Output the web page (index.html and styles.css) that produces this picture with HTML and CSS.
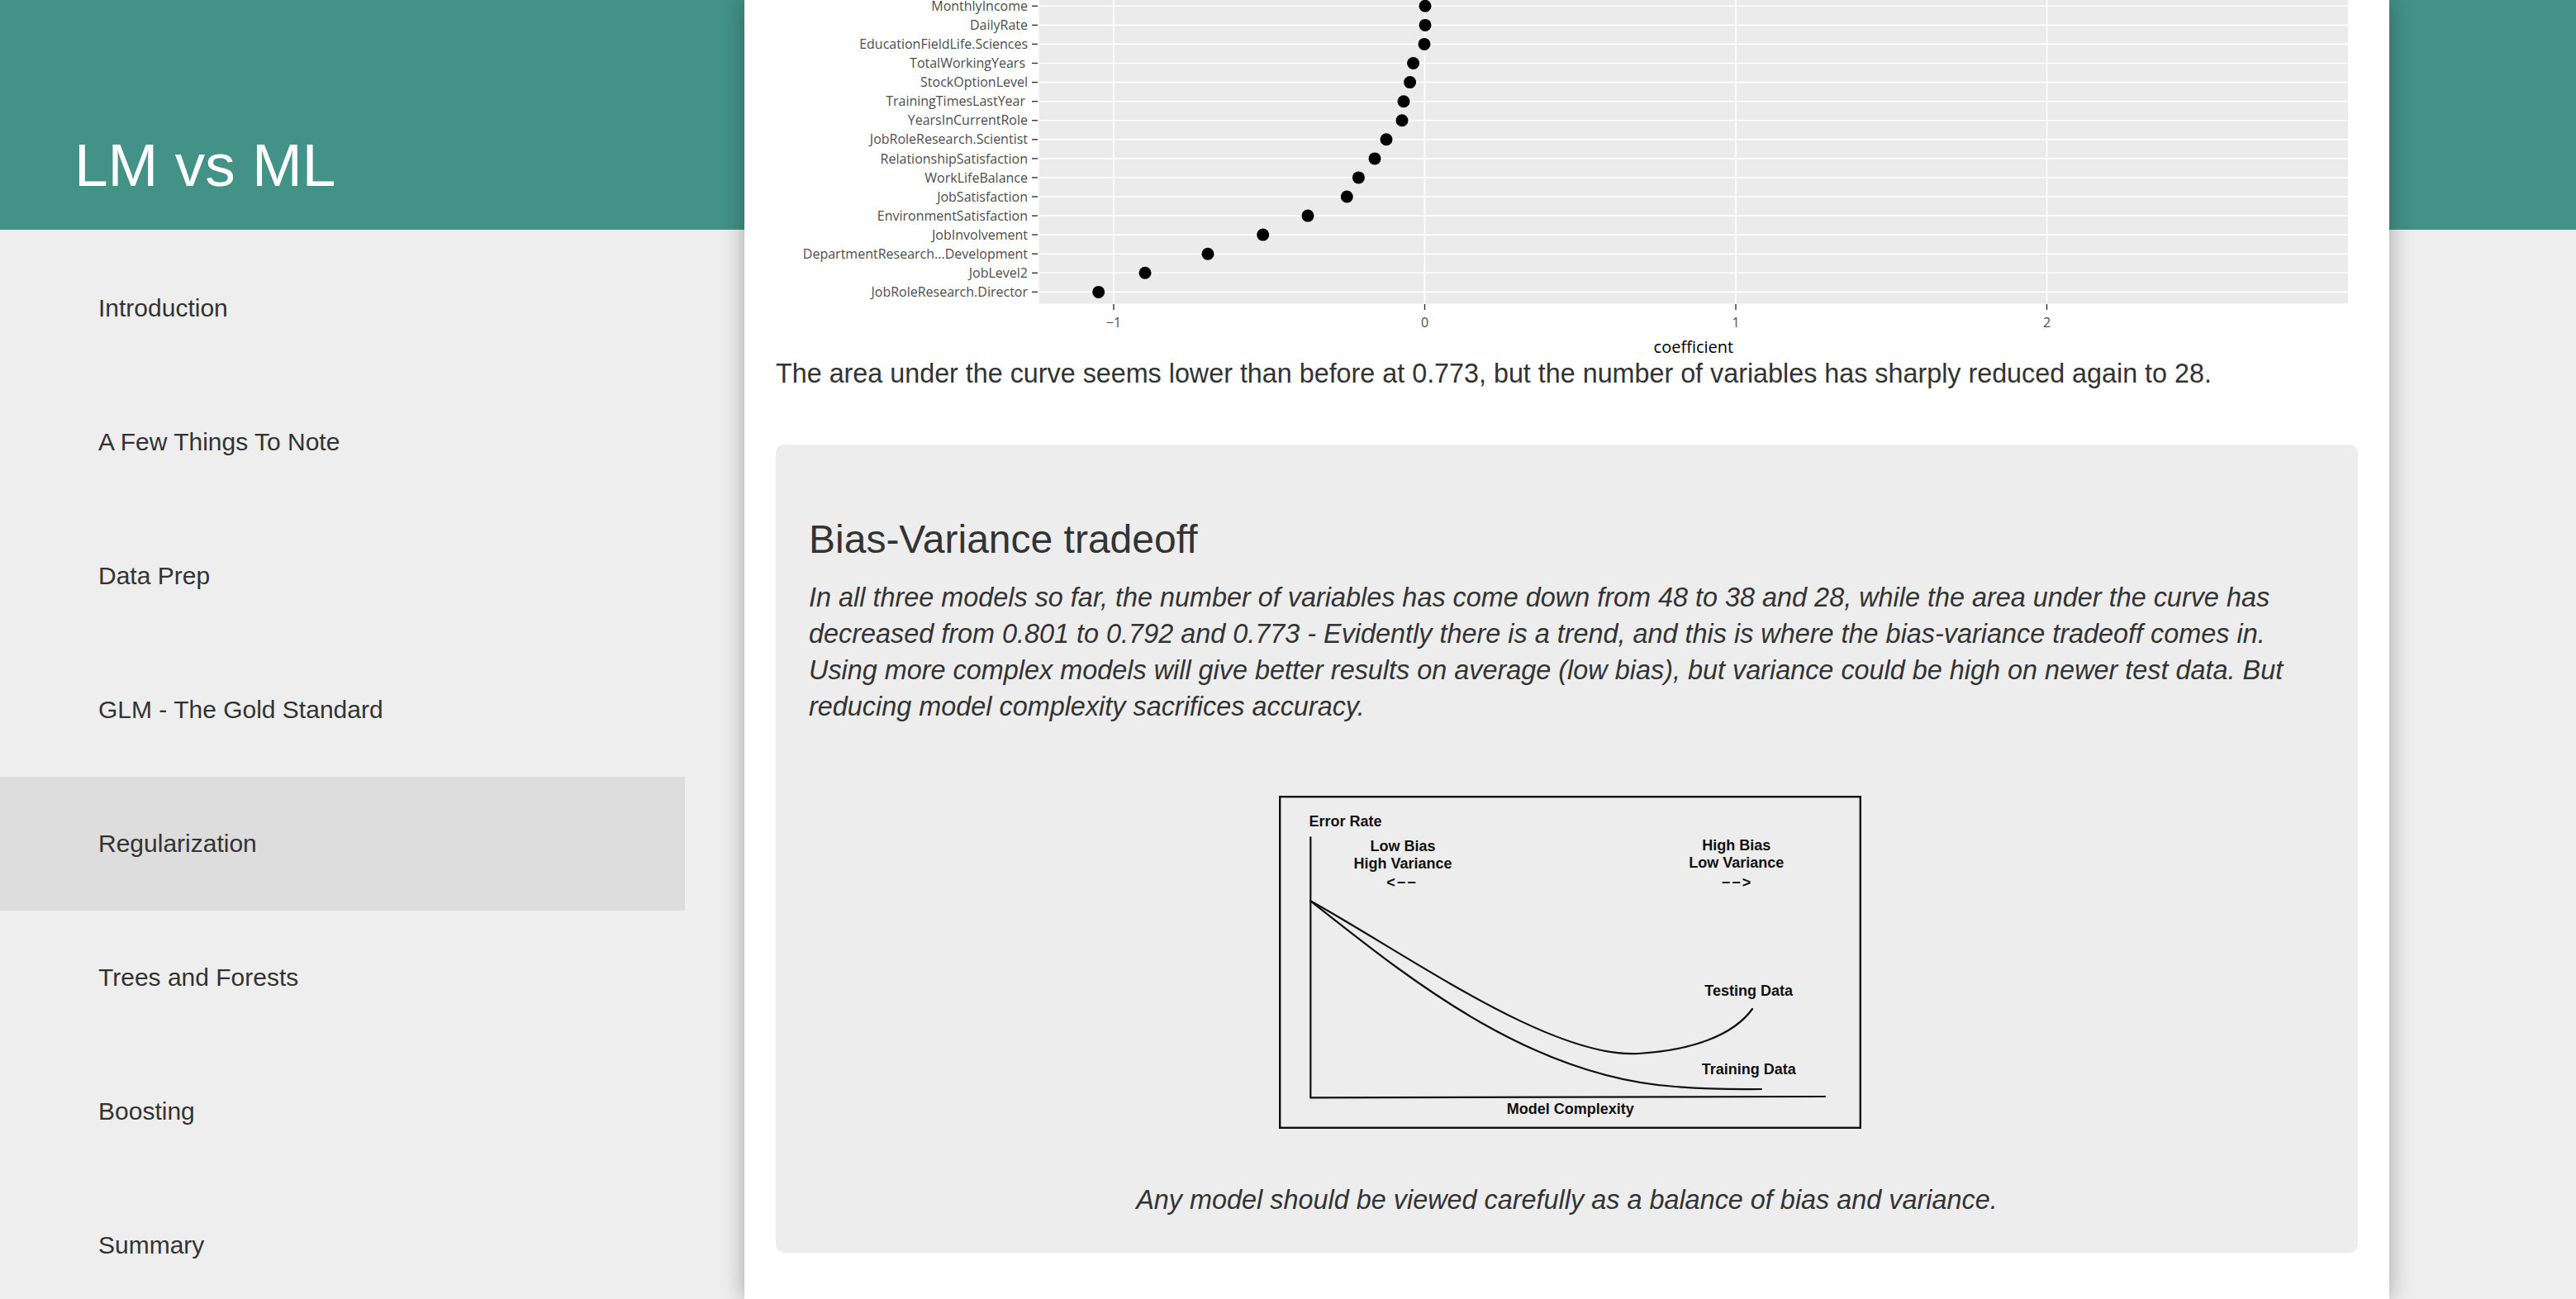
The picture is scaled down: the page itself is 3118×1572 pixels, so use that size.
FILE: index.html
```html
<!DOCTYPE html>
<html lang="en">
<head>
<meta charset="utf-8">
<title>LM vs ML</title>
<link rel="stylesheet" href="styles.css">
</head>
<body>
<div class="layout">
  <aside class="sidebar">
    <div class="brand"><h1>LM vs ML</h1></div>
    <nav class="menu">
      <a class="item">Introduction</a>
      <a class="item">A Few Things To Note</a>
      <a class="item">Data Prep</a>
      <a class="item">GLM - The Gold Standard</a>
      <a class="item active">Regularization</a>
      <a class="item">Trees and Forests</a>
      <a class="item">Boosting</a>
      <a class="item">Summary</a>
    </nav>
  </aside>

  <main class="page">
    <svg class="coef-plot" width="1915" height="432" viewBox="0 0 1915 432" xmlns="http://www.w3.org/2000/svg">
      <rect x="318.7" y="-10" width="1584.3" height="377.5" fill="#ebebeb"/>
      <g stroke="#ffffff" stroke-width="1.6">
        <line x1="409" y1="-10" x2="409" y2="367.5"/>
        <line x1="785.5" y1="-10" x2="785.5" y2="367.5"/>
        <line x1="1162" y1="-10" x2="1162" y2="367.5"/>
        <line x1="1538.5" y1="-10" x2="1538.5" y2="367.5"/>
        <line x1="318.7" y1="7.3" x2="1903" y2="7.3"/>
        <line x1="318.7" y1="30.4" x2="1903" y2="30.4"/>
        <line x1="318.7" y1="53.4" x2="1903" y2="53.4"/>
        <line x1="318.7" y1="76.5" x2="1903" y2="76.5"/>
        <line x1="318.7" y1="99.6" x2="1903" y2="99.6"/>
        <line x1="318.7" y1="122.7" x2="1903" y2="122.7"/>
        <line x1="318.7" y1="145.7" x2="1903" y2="145.7"/>
        <line x1="318.7" y1="168.8" x2="1903" y2="168.8"/>
        <line x1="318.7" y1="191.9" x2="1903" y2="191.9"/>
        <line x1="318.7" y1="214.9" x2="1903" y2="214.9"/>
        <line x1="318.7" y1="238" x2="1903" y2="238"/>
        <line x1="318.7" y1="261.1" x2="1903" y2="261.1"/>
        <line x1="318.7" y1="284.1" x2="1903" y2="284.1"/>
        <line x1="318.7" y1="307.2" x2="1903" y2="307.2"/>
        <line x1="318.7" y1="330.3" x2="1903" y2="330.3"/>
        <line x1="318.7" y1="353.4" x2="1903" y2="353.4"/>
      </g>
      <g fill="#000000">
        <circle cx="786" cy="7.3" r="7.5"/>
        <circle cx="786" cy="30.4" r="7.5"/>
        <circle cx="785" cy="53.4" r="7.5"/>
        <circle cx="771.6" cy="76.5" r="7.5"/>
        <circle cx="767.6" cy="99.6" r="7.5"/>
        <circle cx="760" cy="122.7" r="7.5"/>
        <circle cx="758" cy="145.7" r="7.5"/>
        <circle cx="739" cy="168.8" r="7.5"/>
        <circle cx="725" cy="191.9" r="7.5"/>
        <circle cx="705.4" cy="214.9" r="7.5"/>
        <circle cx="691.3" cy="238" r="7.5"/>
        <circle cx="644" cy="261.1" r="7.5"/>
        <circle cx="589.7" cy="284.1" r="7.5"/>
        <circle cx="523" cy="307.2" r="7.5"/>
        <circle cx="447" cy="330.3" r="7.5"/>
        <circle cx="390.7" cy="353.4" r="7.5"/>
      </g>
      <g stroke="#333333" stroke-width="1.4">
        <line x1="310" y1="7.3" x2="317" y2="7.3"/>
        <line x1="310" y1="30.4" x2="317" y2="30.4"/>
        <line x1="310" y1="53.4" x2="317" y2="53.4"/>
        <line x1="310" y1="76.5" x2="317" y2="76.5"/>
        <line x1="310" y1="99.6" x2="317" y2="99.6"/>
        <line x1="310" y1="122.7" x2="317" y2="122.7"/>
        <line x1="310" y1="145.7" x2="317" y2="145.7"/>
        <line x1="310" y1="168.8" x2="317" y2="168.8"/>
        <line x1="310" y1="191.9" x2="317" y2="191.9"/>
        <line x1="310" y1="214.9" x2="317" y2="214.9"/>
        <line x1="310" y1="238" x2="317" y2="238"/>
        <line x1="310" y1="261.1" x2="317" y2="261.1"/>
        <line x1="310" y1="284.1" x2="317" y2="284.1"/>
        <line x1="310" y1="307.2" x2="317" y2="307.2"/>
        <line x1="310" y1="330.3" x2="317" y2="330.3"/>
        <line x1="310" y1="353.4" x2="317" y2="353.4"/>
        <line x1="409" y1="368" x2="409" y2="375"/>
        <line x1="785.5" y1="368" x2="785.5" y2="375"/>
        <line x1="1162" y1="368" x2="1162" y2="375"/>
        <line x1="1538.5" y1="368" x2="1538.5" y2="375"/>
      </g>
      <g class="ylab" text-anchor="end">
        <text x="305" y="7.3" dy=".35em">MonthlyIncome</text>
        <text x="305" y="30.4" dy=".35em">DailyRate</text>
        <text x="305" y="53.4" dy=".35em">EducationFieldLife.Sciences</text>
        <text x="302" y="76.5" dy=".35em">TotalWorkingYears</text>
        <text x="305" y="99.6" dy=".35em">StockOptionLevel</text>
        <text x="302" y="122.7" dy=".35em">TrainingTimesLastYear</text>
        <text x="305" y="145.7" dy=".35em">YearsInCurrentRole</text>
        <text x="305" y="168.8" dy=".35em">JobRoleResearch.Scientist</text>
        <text x="305" y="191.9" dy=".35em">RelationshipSatisfaction</text>
        <text x="305" y="214.9" dy=".35em">WorkLifeBalance</text>
        <text x="305" y="238" dy=".35em">JobSatisfaction</text>
        <text x="305" y="261.1" dy=".35em">EnvironmentSatisfaction</text>
        <text x="305" y="284.1" dy=".35em">JobInvolvement</text>
        <text x="305" y="307.2" dy=".35em">DepartmentResearch...Development</text>
        <text x="305" y="330.3" dy=".35em">JobLevel2</text>
        <text x="305" y="353.4" dy=".35em">JobRoleResearch.Director</text>
      </g>
      <g class="xlab" text-anchor="middle">
        <text x="409" y="390" dy=".35em">−1</text>
        <text x="785.5" y="390" dy=".35em">0</text>
        <text x="1162" y="390" dy=".35em">1</text>
        <text x="1538.5" y="390" dy=".35em">2</text>
      </g>
      <text class="xtitle" x="1110.9" y="419.6" dy=".35em" text-anchor="middle">coefficient</text>
    </svg>

    <p class="lead">The area under the curve seems lower than before at 0.773, but the number of variables has sharply reduced again to 28.</p>

    <section class="note">
      <h2>Bias-Variance tradeoff</h2>
      <p class="note-text"><em>In all three models so far, the number of variables has come down from 48 to 38 and 28, while the area under the curve has<br>decreased from 0.801 to 0.792 and 0.773 - Evidently there is a trend, and this is where the bias-variance tradeoff comes in.<br>Using more complex models will give better results on average (low bias), but variance could be high on newer test data. But<br>reducing model complexity sacrifices accuracy.</em></p>
      <figure class="fig">
        <svg class="bv-diagram" width="705" height="403" viewBox="0 0 705 403" xmlns="http://www.w3.org/2000/svg">
          <rect x="1.2" y="1.2" width="702.6" height="400.6" fill="none" stroke="#111" stroke-width="2.4"/>
          <g fill="none" stroke="#111" stroke-width="2.2" stroke-linecap="round">
            <path d="M38.3 50.3 V365.3"/>
            <path d="M38.3 365.3 L661 364"/>
            <path d="M38.3 127.3 C160 195 330 318 435 312 C500 308 550 290 573 258"/>
            <path d="M38.3 127.3 C150 215 300 340 480 352 C530 356 560 355 584 355"/>
          </g>
          <g class="dlab">
            <text x="36.5" y="37.3">Error Rate</text>
            <text x="150" y="67.3" text-anchor="middle">Low Bias</text>
            <text x="150" y="88.3" text-anchor="middle">High Variance</text>
            <text x="149" y="110.5" text-anchor="middle" class="arrow">&lt;−−</text>
            <text x="553.7" y="66.3" text-anchor="middle">High Bias</text>
            <text x="553.7" y="87.3" text-anchor="middle">Low Variance</text>
            <text x="554.5" y="110.5" text-anchor="middle" class="arrow">−−&gt;</text>
            <text x="568.7" y="242.3" text-anchor="middle">Testing Data</text>
            <text x="568.7" y="336.6" text-anchor="middle">Training Data</text>
            <text x="352.8" y="385.3" text-anchor="middle">Model Complexity</text>
          </g>
        </svg>
        <figcaption>Any model should be viewed carefully as a balance of bias and variance.</figcaption>
      </figure>
    </section>
  </main>
</div>
</body>
</html>
```

FILE: styles.css
```css
html, body {
  margin: 0;
  padding: 0;
}

body {
  background: #eeeeee;
  font-family: "Liberation Sans", Arial, Helvetica, sans-serif;
  color: #333333;
}

.layout {
  display: flex;
  align-items: flex-start;
  height: 1572px;
  overflow: hidden;
  background: linear-gradient(to bottom, #429287 0, #429287 278px, #eeeeee 278px, #eeeeee 100%);
}

/* ---------- sidebar ---------- */
.sidebar {
  flex: none;
  width: 829px;
}

.brand {
  height: 278px;
  box-sizing: border-box;
  display: flex;
  align-items: flex-end;
  padding: 0 0 42px 90px;
}

.brand h1 {
  margin: 0;
  font-size: 73px;
  line-height: 72px;
  font-weight: normal;
  color: #ffffff;
}

.menu {
  margin-top: 14px;
  display: flex;
  flex-direction: column;
}

.item {
  height: 162px;
  display: flex;
  align-items: center;
  padding-left: 119px;
  font-size: 30px;
  color: #333333;
  text-decoration: none;
}

.item.active {
  background: #dddddd;
}

/* ---------- page card ---------- */
.page {
  flex: none;
  width: 1991px;
  margin-left: 72px;
  box-sizing: border-box;
  min-height: 1572px;
  padding: 0 38px;
  background: #ffffff;
  box-shadow: 0 0 26px rgba(0, 0, 0, 0.32);
}

.coef-plot {
  display: block;
  overflow: hidden;
}

.ylab text,
.xlab text {
  font-family: "Open Sans", "DejaVu Sans", sans-serif;
  font-size: 16px;
  fill: #4d4d4d;
}

.xtitle {
  font-family: "Open Sans", "DejaVu Sans", sans-serif;
  font-size: 20px;
  fill: #000000;
}

.lead {
  margin: 0 0 66px;
  font-size: 32.3px;
  line-height: 40px;
  color: #333333;
}

/* ---------- callout box ---------- */
.note {
  background: #ededed;
  border-radius: 10px;
  padding: 40px 40px 42px;
}

.note h2 {
  margin: 47px 0 0;
  font-size: 48px;
  line-height: 56px;
  font-weight: normal;
  color: #333333;
}

.note-text {
  margin: 20px 0 0;
  font-size: 32.4px;
  line-height: 44px;
  color: #333333;
}

.fig {
  margin: 86px 0 0;
}

.bv-diagram {
  display: block;
  margin: 0 auto;
  padding-left: 8px;
}

.dlab text {
  font-family: "Liberation Sans", Arial, sans-serif;
  font-weight: bold;
  font-size: 18px;
  fill: #111111;
}

.dlab .arrow {
  letter-spacing: 2px;
}

.fig figcaption {
  margin-top: 64px;
  text-align: center;
  font-style: italic;
  font-size: 32.4px;
  line-height: 44px;
  color: #333333;
}
```
